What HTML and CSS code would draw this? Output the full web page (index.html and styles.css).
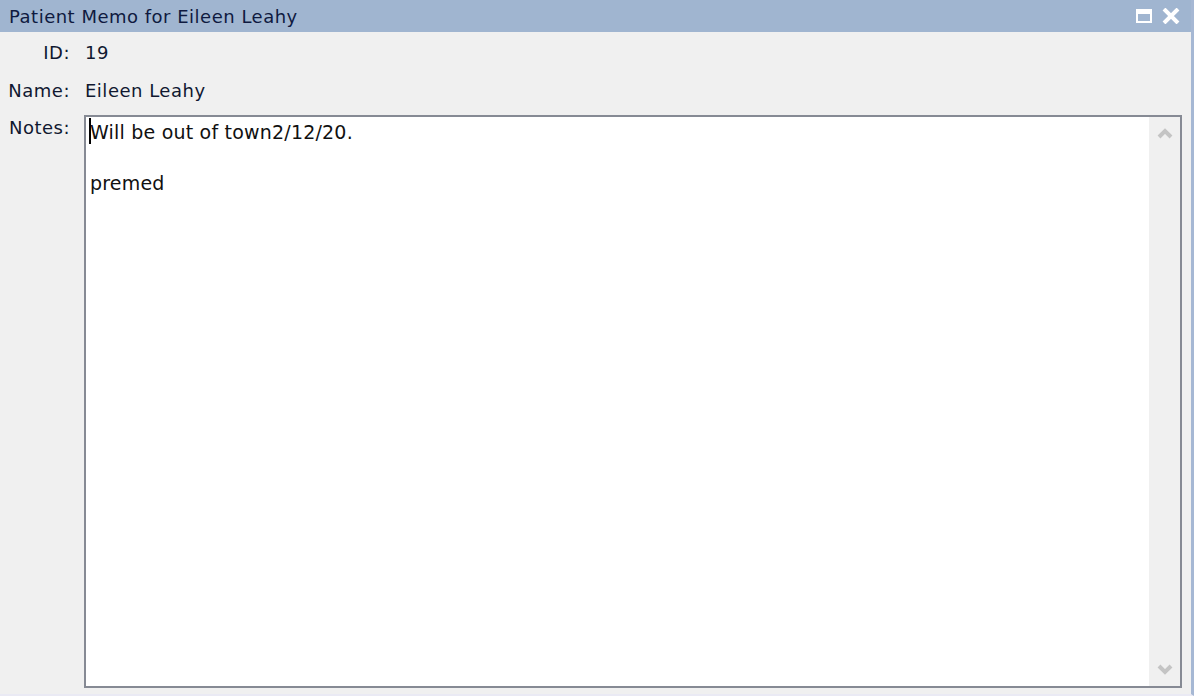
FILE: index.html
```html
<!DOCTYPE html>
<html>
<head>
<meta charset="utf-8">
<link rel="stylesheet" href="styles.css">
</head>
<body>
<div class="window">
  <div class="titlebar">
    <span class="title">Patient Memo for Eileen Leahy</span>
    <div class="controls">
      <svg class="ico" width="16" height="14" viewBox="0 0 16 14"><rect x="1" y="1" width="14" height="12" fill="none" stroke="#fff" stroke-width="2"/><rect x="1" y="1" width="14" height="4" fill="#fff"/></svg>
      <svg class="ico" width="18" height="16" viewBox="0 0 18 16"><path d="M2 1 L16 15 M16 1 L2 15" stroke="#fff" stroke-width="4"/></svg>
    </div>
  </div>
  <div class="body">
    <div class="row">
      <span class="label">ID:</span>
      <span class="value">19</span>
    </div>
    <div class="row">
      <span class="label">Name:</span>
      <span class="value">Eileen Leahy</span>
    </div>
    <div class="row notes-row">
      <span class="label">Notes:</span>
      <div class="notes">
        <div class="notes-text"><span class="caret"></span>Will be out of town2/12/20.<br><br>premed</div>
        <div class="scrollbar">
          <svg width="16" height="12" viewBox="0 0 16 12"><path d="M2 10 L8 4 L14 10" stroke="#c4c4c4" stroke-width="4" fill="none"/></svg>
          <svg width="16" height="12" viewBox="0 0 16 12"><path d="M2 2 L8 8 L14 2" stroke="#c4c4c4" stroke-width="4" fill="none"/></svg>
        </div>
      </div>
    </div>
  </div>
</div>
</body>
</html>
```
FILE: styles.css
```css
html, body {
  margin: 0;
  padding: 0;
  background: #f0f0f0;
}
body {
  width: 1194px;
  height: 696px;
  overflow: hidden;
  font-family: "DejaVu Sans", "Liberation Sans", sans-serif;
}
.window {
  width: 1191px;
  height: 694px;
  border-right: 3px solid #a6b8d4;
  border-bottom: 2px solid #eaeaf4;
  display: flex;
  flex-direction: column;
  background: #f0f0f0;
}
.titlebar {
  height: 32px;
  background: #a0b5d0;
  display: flex;
  align-items: center;
  justify-content: space-between;
  padding: 0 11px 0 9px;
  flex: none;
}
.title {
  font-size: 18px;
  color: #0f1a40;
  letter-spacing: 0.5px;
  padding-top: 1px;
}
.controls {
  display: flex;
  gap: 10px;
  align-items: center;
}
.body {
  flex: 1;
  display: flex;
  flex-direction: column;
  padding-top: 1px;
}
.row {
  display: flex;
  align-items: center;
  height: 38px;
  font-size: 18px;
  color: #101830;
  letter-spacing: 0.5px;
}
.label {
  width: 70px;
  text-align: right;
  flex: none;
}
.value {
  margin-left: 15px;
}
.notes-row {
  flex: 1;
  align-items: flex-start;
  height: auto;
}
.notes-row .label {
  padding-top: 8px;
}
.notes {
  margin-left: 14px;
  margin-top: 6px;
  width: 1098px;
  height: 573px;
  border: 2px solid #868a94;
  background: #fff;
  display: flex;
  box-sizing: border-box;
}
.notes-text {
  flex: 1;
  padding: 3px 3px 0 4px;
  font-size: 19px;
  letter-spacing: 0.2px;
  line-height: 25.5px;
  color: #101010;
  position: relative;
}
.caret {
  position: absolute;
  left: 3px;
  top: 1px;
  width: 2px;
  height: 26px;
  background: #000;
}
.scrollbar {
  width: 31px;
  background: #f0f0f0;
  display: flex;
  flex-direction: column;
  justify-content: space-between;
  align-items: center;
  padding: 10px 0 10px;
}
```
